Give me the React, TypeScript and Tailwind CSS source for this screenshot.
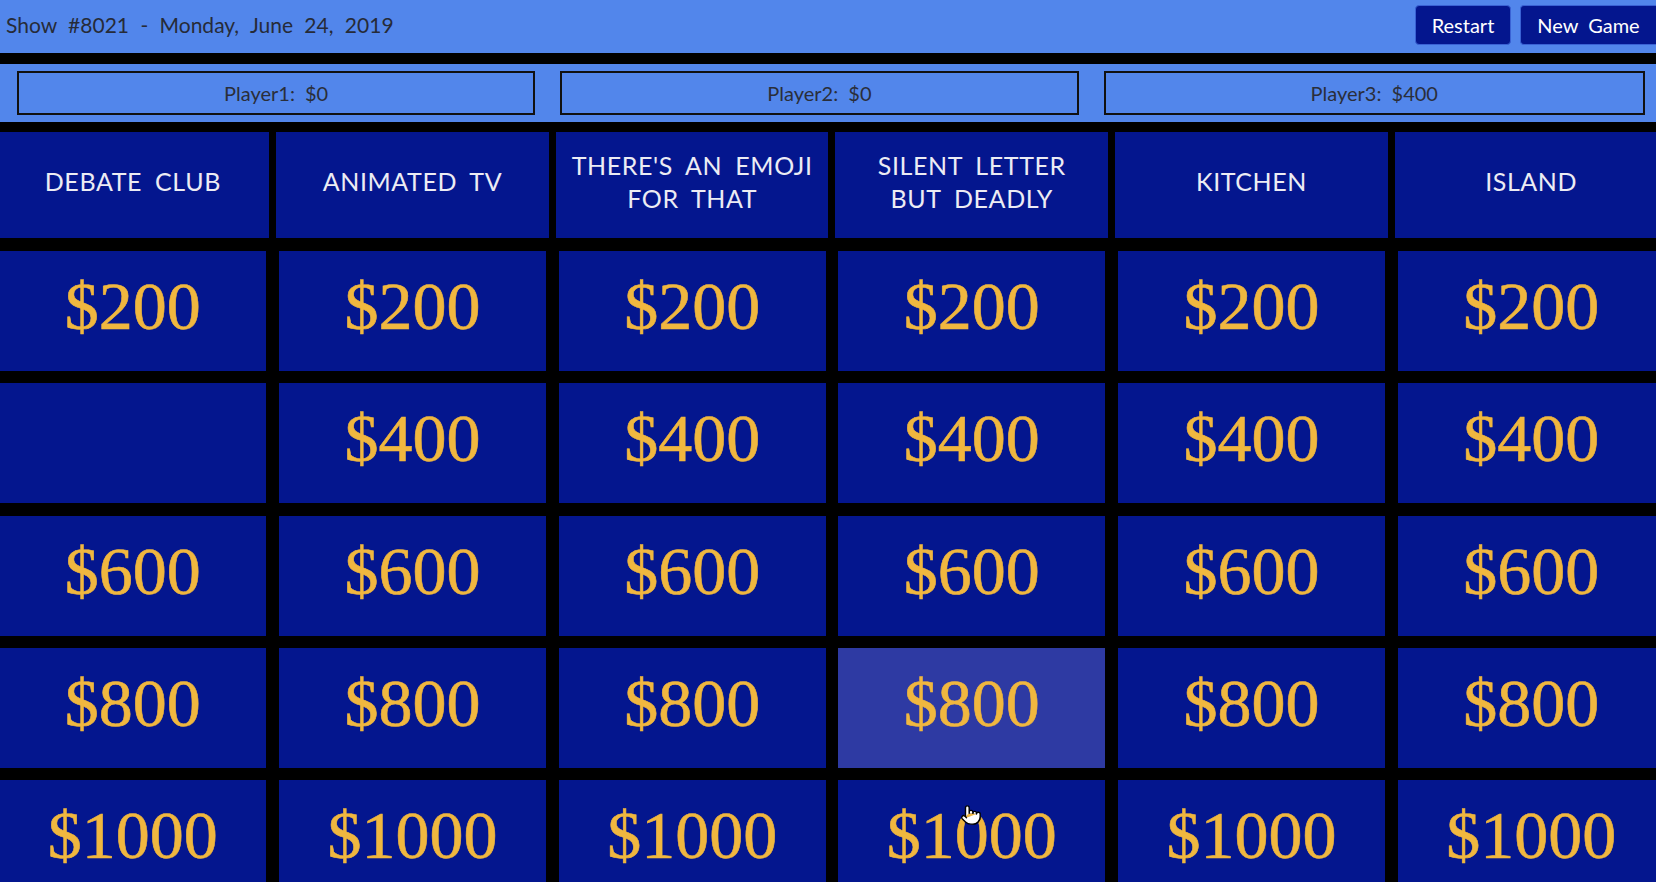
import { Pointer } from "lucide-react";

const categories = [
  "Debate Club",
  "Animated TV",
  "There's an Emoji for That",
  "Silent Letter but Deadly",
  "Kitchen",
  "Island",
];

const values = [200, 400, 600, 800, 1000];

// answered clues are blank
const answered = new Set(["0-400"]);
const hovered = "3-800";

const players = [
  { name: "Player1", score: 0 },
  { name: "Player2", score: 0 },
  { name: "Player3", score: 400 },
];

function TopBar() {
  return (
    <header className="flex h-[53px] items-start justify-between bg-[#5286EB]">
      <span className="pt-[9px] pl-[6px] text-[21px] text-[#262b38] [word-spacing:6px]">
        Show #8021 - Monday, June 24, 2019
      </span>
      <div className="flex gap-[9px] pt-[5px]">
        <button
          type="button"
          className="h-[40px] w-[96px] rounded-[4px] border border-[#3a62d4] bg-[#04168E] text-[20px] text-white"
        >
          Restart
        </button>
        <button
          type="button"
          className="h-[40px] w-[136px] rounded-l-[4px] border border-r-0 border-[#3a62d4] bg-[#04168E] text-[20px] text-white [word-spacing:5px]"
        >
          New Game
        </button>
      </div>
    </header>
  );
}

function Scores() {
  return (
    <div className="mt-[11px] flex h-[58px] gap-[25px] bg-[#5286EB] pt-[7px] pr-[11px] pl-[17px]">
      {players.map((p) => (
        <div
          key={p.name}
          className="flex h-[44px] flex-auto items-center justify-center border-2 border-[#111] text-[20px] text-[#2a2e3a] [word-spacing:5px]"
        >
          {p.name}: ${p.score}
        </div>
      ))}
    </div>
  );
}

function Board() {
  return (
    <div className="-ml-[7px] w-[1678px] pt-[10px]">
      <div className="grid grid-cols-6">
        {categories.map((c) => (
          <div
            key={c}
            className="mx-[3.5px] flex h-[105.5px] items-center justify-center bg-[#04168E] px-[13px] pb-[6px] text-center text-[25px] leading-[33px] tracking-[0.6px] text-[#ECECF4] uppercase [word-spacing:6px]"
          >
            {c}
          </div>
        ))}
      </div>
      <div className="mt-[13.5px] grid grid-cols-6 gap-y-[12.3px]">
        {values.map((v) =>
          categories.map((_, col) => {
            const key = `${col}-${v}`;
            return (
              <div
                key={key}
                className={`mx-[6.3px] flex h-[120px] items-center justify-center pb-[10px] font-['Liberation_Serif',serif] text-[68px] text-[#F0B73F] [-webkit-text-stroke:0.6px_#F0B73F] ${
                  key === hovered ? "bg-[#2E3AA3]" : "bg-[#04168E]"
                }`}
              >
                {answered.has(key) ? "" : `$${v}`}
              </div>
            );
          }),
        )}
      </div>
    </div>
  );
}

export default function App() {
  return (
    <div className="relative h-[882px] w-full overflow-hidden bg-black font-['Lato',sans-serif]">
      <TopBar />
      <Scores />
      <Board />
      <Pointer
        className="absolute top-[804px] left-[960px] h-[22px] w-[22px] fill-white text-black"
        strokeWidth={1.5}
        aria-hidden="true"
      />
    </div>
  );
}
